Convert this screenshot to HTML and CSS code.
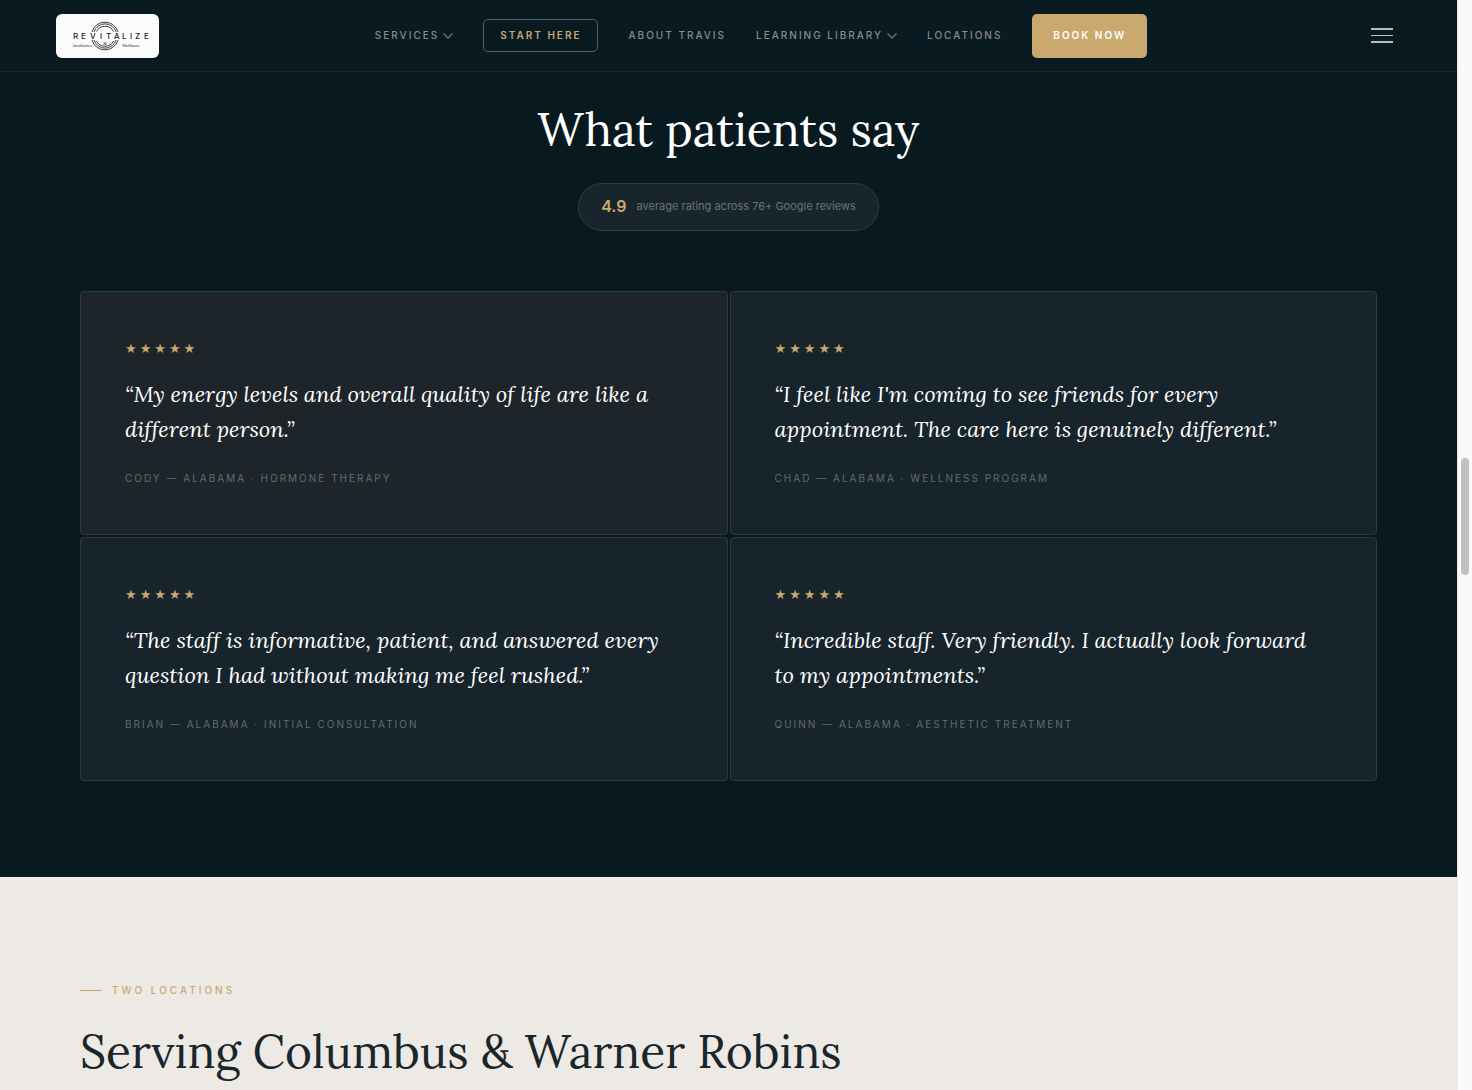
FILE: index.html
```html
<!DOCTYPE html>
<html lang="en">
<head>
    <meta charset="UTF-8">
    <meta name="viewport" content="width=device-width, initial-scale=1.0">
    <title>Revitalize Aesthetics &amp; Wellness</title>
    <link rel="stylesheet" href="styles.css">
</head>
<body>
    <div class="page">
        <header class="header">
            <a href="#" class="logo" aria-label="Revitalize Aesthetics &amp; Wellness">
                <svg width="103" height="44" viewBox="0 0 103 44">
                    <g fill="none" stroke="#3a4247" stroke-width="1">
                        <path d="M36 18a13.5 13.5 0 0 1 26 0M38 18a11.5 11.5 0 0 1 22 0M40.500 17.500a9.500 9.500 0 0 1 17 0"/>
                        <path d="M36 26a13.500 13.500 0 0 0 26 0M38 26a11.500 11.500 0 0 0 22 0M40.500 27a9.500 9.500 0 0 0 17 0"/>
                    </g>
                    <text class="logo-name" y="25" x="17 25 34 44 50 58 66 74 79 88">REVITALIZE</text>
                    <text class="logo-script" x="16" y="33">Aesthetics</text>
                    <text class="logo-script" x="47" y="31">&amp;</text>
                    <text class="logo-script" x="66" y="33">Wellness</text>
                </svg>
            </a>
            <nav class="nav">
                <a href="#" class="nav-link">Services
                    <svg class="chevron" width="10" height="6" viewBox="0 0 10 6"><path d="M0.500 0.500L5 5L9.500 0.500"/></svg>
                </a>
                <a href="#" class="nav-link nav-start">Start Here</a>
                <a href="#" class="nav-link">About Travis</a>
                <a href="#" class="nav-link">Learning Library
                    <svg class="chevron" width="10" height="6" viewBox="0 0 10 6"><path d="M0.500 0.500L5 5L9.500 0.500"/></svg>
                </a>
                <a href="#" class="nav-link">Locations</a>
                <a href="#" class="nav-link nav-book">Book Now</a>
            </nav>
            <button type="button" class="menu-button" aria-label="Menu">
                <span></span>
                <span></span>
                <span></span>
            </button>
        </header>

        <section class="reviews">
            <h2 class="section-title">What patients say</h2>
            <div class="rating">
                <strong>4.9</strong>
                <span>average rating across 76+ Google reviews</span>
            </div>
            <div class="review-grid">
                <article class="review review-featured">
                    <div class="stars">★★★★★</div>
                    <blockquote>“My energy levels and overall quality of life are like a different person.”</blockquote>
                    <p class="author">Cody — Alabama · Hormone Therapy</p>
                </article>
                <article class="review">
                    <div class="stars">★★★★★</div>
                    <blockquote>“I feel like I'm coming to see friends for every appointment. The care here is genuinely different.”</blockquote>
                    <p class="author">Chad — Alabama · Wellness Program</p>
                </article>
                <article class="review">
                    <div class="stars">★★★★★</div>
                    <blockquote>“The staff is informative, patient, and answered every question I had without making me feel rushed.”</blockquote>
                    <p class="author">Brian — Alabama · Initial Consultation</p>
                </article>
                <article class="review">
                    <div class="stars">★★★★★</div>
                    <blockquote>“Incredible staff. Very friendly. I actually look forward to my appointments.”</blockquote>
                    <p class="author">Quinn — Alabama · Aesthetic Treatment</p>
                </article>
            </div>
        </section>

        <section class="locations">
            <p class="eyebrow">Two Locations</p>
            <h2 class="section-title">Serving Columbus &amp; Warner Robins</h2>
        </section>
    </div>
    <div class="scroll-rail">
        <div class="scroll-thumb"></div>
    </div>
</body>
</html>
```
FILE: styles.css
```css
* {
    box-sizing: border-box;
}

body {
    margin: 0;
    display: flex;
    height: 100vh;
    overflow: hidden;
    font-family: Inter, "Liberation Sans", sans-serif;
    background-color: #08191f;
    color: #fff;
}

h2,
p,
blockquote {
    margin: 0;
}

.page {
    flex: 1;
    display: flex;
    flex-direction: column;
}

/* Header */
.header {
    display: flex;
    justify-content: space-between;
    align-items: center;
    height: 72px;
    flex-shrink: 0;
    padding: 0 56px;
    background-color: #0a1a21;
    border-bottom: 1px solid #17262d;
}

.logo {
    height: 44px;
    background-color: #fbfbfb;
    border-radius: 6px;
}

.logo svg {
    display: block;
}

.logo-name {
    font-size: 8px;
    font-weight: 500;
    fill: #20282c;
}

.logo-script {
    font-family: "Liberation Serif", serif;
    font-size: 5px;
    font-style: italic;
    fill: #20282c;
}

.nav {
    display: flex;
    align-items: center;
    gap: 30px;
}

.nav-link {
    display: flex;
    align-items: center;
    gap: 4px;
    font-size: 10px;
    line-height: 15px;
    font-weight: 500;
    letter-spacing: 2px;
    text-transform: uppercase;
    text-decoration: none;
    color: #858c90;
}

.chevron {
    fill: none;
    stroke: #6a7378;
    stroke-width: 1.3;
}

.nav-start {
    padding: 8px 16px;
    border: 1px solid #566067;
    border-radius: 5px;
    font-weight: 600;
    color: #c9a96e;
}

.nav-book {
    padding: 14px 21px 15px;
    border-radius: 5px;
    font-weight: 600;
    background-color: #c9a96e;
    color: #fff;
}

.menu-button {
    display: flex;
    flex-direction: column;
    gap: 5px;
    padding: 8px;
    border: none;
    background: none;
    cursor: pointer;
}

.menu-button span {
    width: 22px;
    height: 2px;
    background-color: #b8bfc2;
}

.menu-button span:nth-child(2) {
    height: 1px;
}

/* Reviews */
.section-title {
    font-family: Lora, "Liberation Serif", serif;
    font-size: 46px;
    line-height: 58px;
    font-weight: 400;
}

.reviews {
    display: flex;
    flex-direction: column;
    align-items: center;
    padding: 29px 80px 96px;
    flex-shrink: 0;
}

.rating {
    display: flex;
    align-items: center;
    gap: 10px;
    height: 48px;
    margin: 24px 0 60px;
    padding: 0 22px 2px;
    border: 1px solid #313b40;
    border-radius: 24px;
    background-color: #19252c;
}

.rating strong {
    font-size: 16px;
    font-weight: 600;
    color: #c9a96e;
}

.rating span {
    font-size: 11px;
    color: #6b7376;
}

.review-grid {
    display: grid;
    grid-template-columns: 1fr 1fr;
    gap: 2px;
    width: 100%;
}

.review {
    padding: 44px 52px 44px 44px;
    border: 1px solid #2f3a40;
    border-radius: 4px;
    background-color: #17242c;
}

.review-featured {
    background-color: #1e252a;
}

.stars {
    font-family: "DejaVu Sans", sans-serif;
    font-size: 13px;
    line-height: 25px;
    letter-spacing: 3px;
    color: #c9a96e;
}

.review blockquote {
    margin: 16px 0 19px;
    font-family: Lora, "Liberation Serif", serif;
    font-size: 22px;
    line-height: 35px;
    font-style: italic;
}

.author {
    font-size: 10px;
    line-height: 24px;
    letter-spacing: 2px;
    text-transform: uppercase;
    color: #636b6f;
}

/* Locations */
.locations {
    flex: 1;
    padding: 103px 80px 0;
    background-color: #edeae5;
    color: #1b262c;
}

.eyebrow {
    display: flex;
    align-items: center;
    gap: 10px;
    margin-bottom: 23px;
    font-size: 10px;
    line-height: 20px;
    font-weight: 500;
    letter-spacing: 3px;
    text-transform: uppercase;
    color: #c9a96e;
}

.eyebrow::before {
    content: "";
    width: 22px;
    height: 1px;
    background-color: #c9a96e;
}

/* Scroll rail */
.scroll-rail {
    position: relative;
    width: 15px;
    background-color: #fafafa;
    border-left: 1px solid #e8e8e8;
}

.scroll-thumb {
    position: absolute;
    top: 42%;
    left: 3px;
    width: 8px;
    height: 117px;
    border-radius: 4px;
    background-color: #c1c1c1;
}
```
